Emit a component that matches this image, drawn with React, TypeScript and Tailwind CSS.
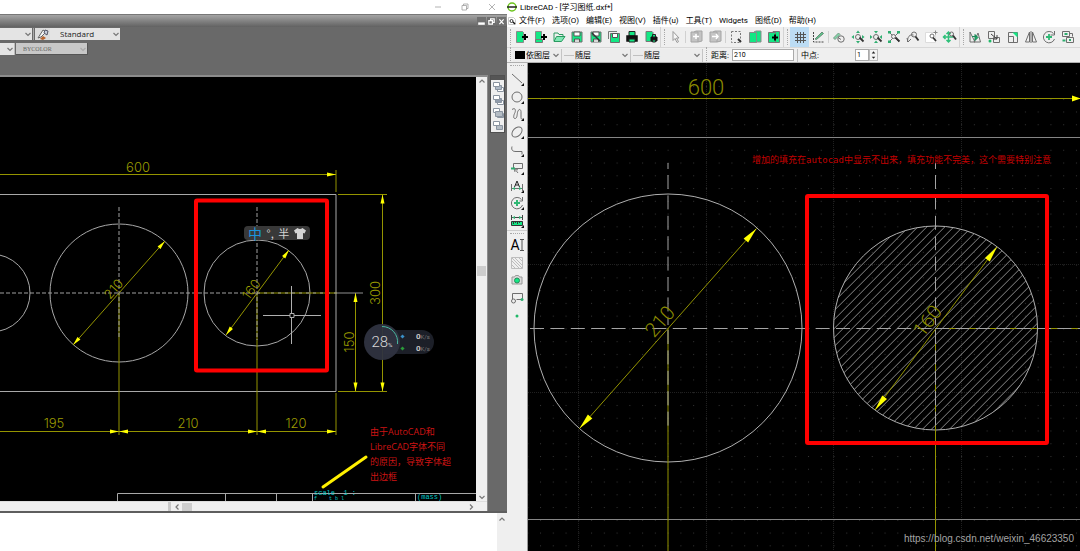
import type { ReactNode } from "react";

const GREEN = "#12e884";
const DIM = "#949400";

/* ---------- icons, all on a 16 x 16 grid ---------- */

function Icon({ children }: { children: ReactNode }) {
  return (
    <svg viewBox="0 0 16 16" className="w-4 h-4 shrink-0" fill="none" stroke="#6e6e6e" strokeWidth="1">
      {children}
    </svg>
  );
}

const floppy = (
  <>
    <path d="M3 3h10v10H3z" fill={GREEN} />
    <path d="M5 3h6v4H5z" fill="#fff" stroke="#555" />
    <path d="M5.500 13v-3h5v3" fill="#d8d8d8" stroke="#555" />
  </>
);

const glass = <path d="M9.500 8.500l4 4" stroke="#333" strokeWidth="1.800" />;

const fileIcons = [
  {
    name: "New",
    art: (
      <>
        <path d="M2.500 2.500h6l1 1v10h-7z" fill={GREEN} stroke="#8a8a8a" />
        <path d="M8 8h6M11 5v6" stroke="#000" strokeWidth="2" />
      </>
    ),
  },
  {
    name: "New from template",
    art: (
      <>
        <path d="M2.500 2.500h6v8h-6z" fill={GREEN} stroke="#8a8a8a" />
        <path d="M2.500 10.500h7v3h-7z" fill={GREEN} stroke="#777" />
        <path d="M8 8h6M11 5v6" stroke="#000" strokeWidth="2" />
      </>
    ),
  },
  {
    name: "Open",
    art: (
      <>
        <path d="M3 12V4h4l1 1.500h4V8" stroke="#2a9a60" />
        <path d="M3 12.500L5.500 7.500H14l-3.500 5z" fill="#7fe8b4" stroke="#2a9a60" />
      </>
    ),
  },
  { name: "Save", art: floppy },
  {
    name: "Save as",
    art: (
      <>
        {floppy}
        <path d="M4 4l8 8" stroke="#333" strokeWidth="1.500" />
      </>
    ),
  },
  {
    name: "Save all",
    art: (
      <>
        <path d="M2.500 10V2.500H11" stroke="#777" />
        <path d="M4.500 4.500h9v9h-9z" fill={GREEN} />
        <path d="M6.500 4.500h5v4h-5z" fill="#fff" stroke="#555" />
      </>
    ),
  },
  {
    name: "Print",
    art: (
      <>
        <path d="M5 2.500h6V7H5z" fill={GREEN} stroke="#222" />
        <path d="M3 7h10v5H3z" fill="#111" stroke="#111" strokeWidth="1.500" />
        <path d="M5 10h6v3H5z" fill={GREEN} stroke="#222" />
      </>
    ),
  },
  {
    name: "Print preview",
    art: (
      <>
        <path d="M3 2.500h6l1 1v9H3z" fill={GREEN} stroke="#777" />
        <path d="M8 8h6v4H8z" fill="#111" stroke="#111" />
        <path d="M9.500 5.500h3V8h-3zM9.500 11h3v2h-3z" fill={GREEN} stroke="#222" />
      </>
    ),
  },
];

const pointerIcons = [
  { name: "Select", art: <path d="M5 2.500v9l2-2 2 4 1.500-.8-2-3.700H11z" fill="#f6f6f6" stroke="#999" /> },
];

const undoIcons = [
  {
    name: "Undo",
    art: (
      <>
        <path d="M3 3h7v10H3zM6 3l2-1h6v10l-4 1" fill="#c4c4c4" stroke="#a4a4a4" />
        <path d="M5 7.500h6M8 5v5" stroke="#fff" strokeWidth="1.500" />
      </>
    ),
  },
  {
    name: "Redo",
    art: (
      <>
        <path d="M3 3h7v10H3zM6 3l2-1h6v10l-4 1" fill="#c4c4c4" stroke="#a4a4a4" />
        <path d="M5 7.500h6M9 5l2 2.500L9 10" stroke="#fff" strokeWidth="1.500" />
      </>
    ),
  },
];

const clipIcons = [
  {
    name: "Cut",
    art: (
      <>
        <path d="M3.500 2.500h9v11h-9z" strokeDasharray="2 1.500" stroke="#777" />
        <path d="M10 10l3 3" stroke="#333" strokeWidth="2" />
      </>
    ),
  },
  {
    name: "Copy",
    art: (
      <>
        <path d="M7 3l2-1h5v11H8z" fill={GREEN} stroke="#8a8a8a" />
        <path d="M2.500 3.500h7v10h-7z" fill={GREEN} stroke="#8a8a8a" />
      </>
    ),
  },
  {
    name: "Paste",
    art: (
      <>
        <path d="M7 2.500h6.500v11H7z" fill={GREEN} stroke="#777" />
        <path d="M2.500 3.500h7v10h-7z" fill={GREEN} stroke="#777" />
        <path d="M6 8.500h6M9 5.500v6" stroke="#000" strokeWidth="2" />
      </>
    ),
  },
];

const viewIcons = [
  {
    name: "Zoom redraw",
    art: (
      <>
        <path d="M2.500 9l5-5 1.500 1.500-5 5z" fill="#7fd8a8" stroke="#7a9a88" />
        <circle cx="10" cy="10" r="3.200" />
        <path d="M7 8.500l3 2" />
      </>
    ),
  },
  {
    name: "Zoom in",
    art: (
      <>
        <circle cx="8" cy="8" r="2.500" />
        <path d="M8 1.500l2 2.500H6zM8 14.500L6 12h4zM1.500 8L4 6v4zM14.500 8L12 10V6z" fill="#2fae70" stroke="none" />
        {glass}
      </>
    ),
  },
  {
    name: "Zoom out",
    art: (
      <>
        <circle cx="8" cy="8" r="2.500" />
        <path d="M8 4.500L6 2h4zM8 11.500l2 2.500H6zM4.500 8L2 10V6zM11.500 8L14 6v4z" fill="#2fae70" stroke="none" />
        {glass}
      </>
    ),
  },
  {
    name: "Zoom auto",
    art: (
      <>
        <path d="M3 3l10 10M13 3L3 13" />
        <circle cx="7.500" cy="7.500" r="2" fill="#efefef" />
        <path d="M2 2h3v2.500H2zM11 2h3v2.500h-3zM2 11.500h3V14H2z" fill="#2fae70" stroke="none" />
        {glass}
      </>
    ),
  },
  {
    name: "Zoom previous",
    art: (
      <>
        <path d="M2.500 13c0-5 2-8 6-7M2 9l1 4 3-3" />
        <circle cx="9" cy="5.500" r="2.500" />
        <path d="M10.500 7.500l3 4" stroke="#333" strokeWidth="1.800" />
      </>
    ),
  },
  {
    name: "Zoom window",
    art: (
      <>
        <path d="M2.500 3.500h10v10h-10z" fill="#fff" stroke="#dcdcdc" />
        <circle cx="9" cy="7" r="2" />
        <path d="M12.500 1.500v4M10.500 3.500h4" stroke="#888" />
        <path d="M10 8.500l3 3.500" stroke="#333" strokeWidth="1.800" />
      </>
    ),
  },
  {
    name: "Zoom pan",
    art: (
      <>
        <path d="M6.500 3v10M1.500 8h10M4.500 5l2-2 2 2M4.500 11l2 2 2-2M3.500 6l-2 2 2 2" stroke="#2fc07a" strokeWidth="1.500" />
        <circle cx="9.500" cy="5" r="2" />
        <path d="M11 6.500l3 4" stroke="#333" strokeWidth="1.800" />
      </>
    ),
  },
];

const modifyIcons = [
  {
    name: "Move",
    art: (
      <>
        <path d="M3 3v10h5zM13.500 13H7l4-9z" />
        <path d="M5 7.500h5M8 5.500l3 3-3 3z" fill="#1cae6a" stroke="#1c8a58" />
      </>
    ),
  },
  {
    name: "Duplicate",
    art: (
      <>
        <path d="M2.500 2.500h6v7h-6zM7.500 8.500h6v5h-6z" />
        <path d="M5 5l6 5M11 6v4H7" stroke="#444" />
        <circle cx="4" cy="12" r="1.500" fill="#20b868" stroke="none" />
      </>
    ),
  },
  {
    name: "Scale",
    art: (
      <>
        <path d="M4.500 3.500h9v10h-9zM4.500 7.500h5v6" />
        <path d="M8.500 3.500h5v5z" fill={GREEN} stroke="none" />
      </>
    ),
  },
  { name: "Mirror", art: <path d="M6.500 3v10h-4zM9.500 3v10h4zM8 2v12" /> },
  {
    name: "Rotate",
    art: (
      <>
        <path d="M12.500 4.500A5.700 5.700 0 1 0 13.500 10M13.500 2v4h-4" />
        <path d="M8 5v6M5 8h6" stroke="#2fb874" strokeWidth="1.800" />
      </>
    ),
  },
  {
    name: "Move and rotate",
    art: (
      <>
        <path d="M2.500 2.500h7v5h-7zM6.500 8.500h7v5h-7zM9.500 4.500h3v3" />
        <path d="M4.500 4h3v2h-3zM9 10h2v2H9zM2.500 10.500h3v2h-3z" fill="#2fae70" stroke="none" />
      </>
    ),
  },
];

const corner = <path d="M15 12v3h-3z" fill="#111" stroke="none" />;

const drawIcons = [
  { name: "Line", art: <path d="M3 3l10 9" /> },
  { name: "Circle", art: <circle cx="8" cy="8" r="5" /> },
  { name: "Curve", art: <path d="M3 3.500c3-2 4 0 3 3-1.500 3-2 6 0 6s2-3 2.500-6 3-4.500 3.500-1v6c0 1.500 1 2 2 1.500" /> },
  { name: "Ellipse", art: <ellipse cx="8" cy="8" rx="6" ry="4" transform="rotate(-45 8 8)" /> },
  { name: "Polyline", art: <path d="M3 4.500c-1 4 1 5 4 5h6v3" /> },
  {
    name: "Select entities",
    art: (
      <>
        <path d="M4.500 3.500h9v5h-9z" />
        <path d="M5 8l4 5M6 12l-1-4 4 2" stroke="#777" />
        <path d="M2 7.500h4v2H2z" fill="#2fae70" stroke="none" />
      </>
    ),
  },
  {
    name: "Dimension",
    art: (
      <>
        <path d="M2.500 6v7M13.500 6v7M3 10.500h10" />
        <path d="M5.500 9L8 3l2.500 6M6.500 7h3" stroke="#222" />
        <path d="M3 10.500l3-1.500v3zM13 10.500L10 9v3z" fill="#2fae70" stroke="none" />
      </>
    ),
  },
  {
    name: "Modify",
    art: (
      <>
        <path d="M12.500 4.500A5.700 5.700 0 1 0 13.500 10M13.500 2v4h-3" />
        <path d="M8 5v6M5 8h6" stroke="#2fb874" strokeWidth="2" />
      </>
    ),
  },
  {
    name: "Info",
    art: (
      <>
        <path d="M2.500 2v5M13.500 2v5M3 4.500h10" stroke="#444" />
        <path d="M3 4.500l3-1.500v3zM13 4.500L10 3v3z" fill="#2fae70" stroke="none" />
        <path d="M2.500 8.500h11v4h-11z" fill={GREEN} stroke="#333" />
        <path d="M4.500 9v2M6.500 9v1M8.500 9v2M10.500 9v1" stroke="#333" />
      </>
    ),
  },
];

const extraIcons = [
  { name: "Hatch", art: <path d="M2.500 2.500h11v11h-11zM3 10l3 3M3 6l7 7M3 3l10 10M6 3l7 7M10 3l3 3" stroke="#bdbdbd" /> },
  {
    name: "Insert image",
    art: (
      <>
        <path d="M3 5h2.500l1-1.500h3l1 1.500H13v7H3z" fill="#dcdcdc" stroke="#999" />
        <circle cx="8" cy="8.500" r="2.500" fill={GREEN} stroke="#2a8a5a" />
      </>
    ),
  },
  {
    name: "Block",
    art: (
      <>
        <path d="M3.500 9V3.500h10v6h-6" />
        <circle cx="4.500" cy="11" r="2" />
        <circle cx="13" cy="9.500" r="1.500" fill="#2fae70" stroke="none" />
      </>
    ),
  },
  { name: "Point", art: <circle cx="8" cy="8" r="1.500" fill="#20b868" stroke="none" /> },
];

type Tool = { name: string; art: ReactNode };

function Tools({ items, className }: { items: Tool[]; className: string }) {
  return (
    <div className={`flex shrink-0 ${className}`}>
      {items.map((item) => (
        <button key={item.name} type="button" aria-label={item.name} className="flex flex-1 items-center justify-center min-w-0">
          <Icon>{item.art}</Icon>
        </button>
      ))}
    </div>
  );
}

function Handle() {
  return (
    <div className="flex w-[6px] shrink-0 items-center justify-center">
      <div className="h-4 w-px border-l border-dotted border-[#a8a8a8]" />
    </div>
  );
}

function Rule() {
  return <div className="mx-px my-1 w-px shrink-0 bg-[#d0d0d0]" />;
}

function Chevron({ dir, color = "#777" }: { dir: "up" | "down" | "left" | "right"; color?: string }) {
  const paths = {
    up: "M1.500 5.500L4 3l2.500 2.500",
    down: "M1.500 3L4 5.500 6.500 3",
    left: "M5.500 1.500L3 4l2.500 2.500",
    right: "M3 1.500L5.500 4 3 6.500",
  };
  return (
    <svg viewBox="0 0 8 8" className="w-2 h-2 shrink-0" fill="none" stroke={color} strokeWidth="1.200">
      <path d={paths[dir]} />
    </svg>
  );
}

/* ---------- drawing helpers ---------- */

// tip at (x, y), pointing in the direction of angle
function Arrow({ x, y, angle, length, width }: { x: number; y: number; angle: number; length: number; width: number }) {
  return (
    <path
      d={`M0 0L${-length} ${-width / 2}V${width / 2}z`}
      fill="#ffff00"
      transform={`translate(${x} ${y}) rotate(${angle})`}
    />
  );
}

function Label({ x, y, angle = 0, size = 13, tall = false, children }: { x: number; y: number; angle?: number; size?: number; tall?: boolean; children: string }) {
  return (
    <text
      transform={`translate(${x} ${y}) rotate(${angle})`}
      textAnchor="middle"
      fontSize={size}
      fill={tall ? "#8c8c00" : "#9c9c00"}
      className={tall ? "font-light [font-family:Roboto,sans-serif]" : "font-light [font-family:Inter,sans-serif]"}
    >
      {children}
    </text>
  );
}

function PlateDrawing() {
  return (
    <svg viewBox="0 77 476 424" preserveAspectRatio="xMinYMin slice" className="absolute inset-0 h-full w-full" fill="none">
      <g stroke="#a8a8a8">
        <path d="M0 194.500H336V391.500H0" />
        <circle cx="-9" cy="293" r="39" />
        <circle cx="119" cy="293" r="69" />
        <circle cx="257" cy="293" r="53" />
      </g>
      <g stroke={DIM}>
        <path d="M0 174.500H336M336 170v22M338 194.500h49M338 391.500h49M336 393v42M382.500 194v197M355.500 293v98" />
        <path d="M119 293v142M257 293v142M257 293h80M0 431.500h336" />
        <path d="M73 345l92-104M226 335l63-85" />
      </g>
      <g stroke="#a0a0a0" strokeDasharray="4 2">
        <path d="M0 293h257M119 207v130M257 207v133" />
        <path d="M257 293h80" strokeDasharray="3 4" />
      </g>
      <path d="M337 293h26" stroke="#909090" />
      <Arrow x={336} y={174.5} angle={0} length={9} width={4} />
      <Arrow x={119} y={431.5} angle={0} length={9} width={4} />
      <Arrow x={119} y={431.5} angle={180} length={9} width={4} />
      <Arrow x={257} y={431.5} angle={0} length={9} width={4} />
      <Arrow x={257} y={431.5} angle={180} length={9} width={4} />
      <Arrow x={336} y={431.5} angle={0} length={9} width={4} />
      <Arrow x={382.5} y={194.5} angle={-90} length={9} width={4} />
      <Arrow x={382.5} y={391.5} angle={90} length={9} width={4} />
      <Arrow x={355.5} y={293} angle={-90} length={9} width={4} />
      <Arrow x={355.5} y={391.5} angle={90} length={9} width={4} />
      <Arrow x={165} y={241} angle={-48.5} length={9} width={4} />
      <Arrow x={73} y={345} angle={131.5} length={9} width={4} />
      <Arrow x={289} y={250} angle={-53.5} length={9} width={4} />
      <Arrow x={226} y={335} angle={126.5} length={9} width={4} />
      <Label x={138} y={172}>600</Label>
      <Label x={54} y={428}>195</Label>
      <Label x={188} y={428}>210</Label>
      <Label x={296} y={428}>120</Label>
      <Label x={354} y={342} angle={-90}>150</Label>
      <Label x={380} y={293} angle={-90}>300</Label>
      <Label x={117} y={292} angle={-48.5}>210</Label>
      <Label x={255} y={292} angle={-53.5}>160</Label>

      {/* title block at the bottom edge */}
      <path d="M117.500 501v-7.500H476M225.500 494v7M276.500 494v7M312.500 494v7M415.500 494v7" stroke="#a8a8a8" />
      <g fill="#00c4c4" className="[font-family:'Liberation_Mono',monospace]">
        <text x="314" y="495" fontSize="7" xmlSpace="preserve">scale  1 :</text>
        <text x="314" y="500" fontSize="5" xmlSpace="preserve">f    t b l</text>
        <text x="417" y="499" fontSize="7">(mass)</text>
      </g>
      <path d="M323 487l43-30" stroke="#fff000" strokeWidth="3" strokeLinecap="round" />

      {/* crosshair */}
      <path d="M263 315.500h27M294 315.500h27M291.500 286v27M291.500 317v27M290 313.500h4v4h-4z" stroke="#b0b0b0" />
      <rect x="196" y="200.500" width="131" height="170" rx="1" stroke="#ff0000" strokeWidth="4" />
    </svg>
  );
}

const HATCH = Array.from({ length: 48 }, (_, i) => 1054.7 + i * 9);

function HatchDrawing() {
  return (
    <svg viewBox="528 63 552 488" preserveAspectRatio="xMinYMin slice" className="absolute inset-0 h-full w-full" fill="none">
      <defs>
        <pattern id="dots" x="578.300" y="137" width="12.760" height="12.760" patternUnits="userSpaceOnUse">
          <rect width="1" height="1" fill="#343434" />
        </pattern>
        <clipPath id="disc">
          <circle cx="935.500" cy="328" r="102" />
        </clipPath>
      </defs>
      <rect x="528" y="63" width="552" height="488" fill="url(#dots)" />
      <path
        d="M578.500 63v488M706.500 63v488M833.500 63v488M961.500 63v488M528 264.500h552M528 392.500h552"
        stroke="#202020"
        strokeDasharray="1 1"
      />
      <path d="M528 137.500h552M528 519.500h552" stroke="#858585" />
      <g clipPath="url(#disc)" stroke="#8a8a8a">
        {HATCH.map((sum) => (
          <path key={sum} d={`M${sum - 440} 440L${sum - 220} 220`} />
        ))}
      </g>
      <g stroke="#b0b0b0">
        <circle cx="668" cy="328" r="134" />
        <circle cx="935.500" cy="328" r="102" />
      </g>
      <g stroke={DIM}>
        <path d="M528 98.500h552M668 328v223M935.500 328v223M935.500 328.500H1080" />
        <path d="M579.500 428.500l177-200M875 410l122-163" />
      </g>
      <g stroke="#a4a4a4" strokeDasharray="14 6.400">
        <path d="M530 328.500h405M668 175v150M935.500 175v150" />
        <path d="M668 163v6M935.500 163v6" strokeDasharray="none" />
        <path d="M935 328.500h145M668 330v100M935.500 330v100" />
      </g>
      <Arrow x={1081} y={98.5} angle={0} length={9} width={6} />
      <Arrow x={756.5} y={228.5} angle={-48.5} length={16} width={6} />
      <Arrow x={579.5} y={428.5} angle={131.5} length={16} width={6} />
      <Arrow x={997} y={247} angle={-53} length={16} width={6} />
      <Arrow x={875} y={410} angle={127} length={16} width={6} />
      <Label x={706} y={95} size={22} tall>600</Label>
      <Label x={665} y={326} angle={-48.5} size={20} tall>210</Label>
      <Label x={933} y={325} angle={-53} size={20} tall>160</Label>
      <rect x="807" y="196" width="240" height="247" rx="1" stroke="#ff0000" strokeWidth="4" />
    </svg>
  );
}

/* ---------- left window ---------- */

function Speed({ color }: { color: string }) {
  return (
    <div className="flex items-center">
      <span className={`mr-3 h-[3px] w-[3px] rotate-45 ${color}`} />
      <span className="font-bold text-[#c8c8c8]">0</span>
      <span className="text-[6px] text-[#777]">K/s</span>
    </div>
  );
}

function AutoCadWindow() {
  return (
    <section className="flex min-w-0 flex-col bg-[#696969]">
      <header className="flex h-[14px] shrink-0 items-center justify-end gap-3 bg-white pr-2 text-[#999]">
        {["M4 8h8", "M4 6h6v6H4zM6 6V4h6v6h-2", "M4 4l8 8M12 4l-8 8"].map((d, i) => (
          <button key={d} type="button" aria-label={["Minimize", "Restore", "Close"][i]} className="flex h-3 w-[15px] items-center justify-center">
            <svg viewBox="0 0 16 16" className="h-3 w-3" fill="none" stroke="currentColor"><path d={d} /></svg>
          </button>
        ))}
      </header>
      <div className="flex h-[13px] shrink-0 items-center justify-end gap-px border-t border-[#777] bg-linear-to-b from-[#a4a4a4] to-[#626262] pr-px">
        {["M3 10h9v2H3z", "M3 6h6v6H3zM6 5V3h6v6h-2", "M4 4l7 8M11 4l-7 8"].map((d, i) => (
          <button key={d} type="button" aria-label={["Minimize drawing", "Restore drawing", "Close drawing"][i]} className="flex h-[9px] w-[9px] items-center justify-center bg-[#707070]">
            <svg viewBox="0 0 15 15" className="h-[9px] w-[9px]" fill="none" stroke="#fff" strokeWidth="2"><path d={d} /></svg>
          </button>
        ))}
      </div>

      <div className="flex h-[48px] shrink-0 flex-col gap-[3px] pt-px text-[8px] leading-3 text-[#222] [font-family:'Open_Sans','Noto_Sans_CJK_SC',sans-serif]">
        <div className="flex h-3">
          <button type="button" aria-label="Text style" className="flex w-8 items-center justify-end bg-[#e4e4e4]">
            <Chevron dir="down" />
          </button>
          <div className="mx-px w-px bg-[#aaa]" />
          <button type="button" aria-label="Style manager" className="flex w-[15px] items-center justify-center bg-[#dcdcdc]">
            <svg viewBox="0 0 14 12" className="h-3 w-[14px]" fill="none">
              <path d="M2 10l5-8 3 2-5 5z" stroke="#666" fill="#f4f4f4" />
              <path d="M9 2l3 1-1 4-3-2z" stroke="#556" fill="#c8d0dc" />
              <path d="M4 11l3-3 3 2-3 2z" fill="#b8622c" />
            </svg>
          </button>
          <label className="relative flex w-[70px] items-center bg-[#e4e4e4]">
            <select aria-label="Dimension style" className="h-3 w-full appearance-none pl-[10px]">
              <option>Standard</option>
            </select>
            <span className="absolute right-0"><Chevron dir="down" /></span>
          </label>
        </div>
        <div className="flex h-3">
          <button type="button" aria-label="Line weight" className="flex w-[14px] items-center justify-end bg-[#e4e4e4]">
            <Chevron dir="down" />
          </button>
          <div className="mr-px w-px bg-[#bbb]" />
          <label className="relative flex w-[72px] items-center border-r border-b border-[#555] bg-[#c8c8c8]">
            <select aria-label="Plot style" disabled className="w-full appearance-none pl-[7px] text-[6px] leading-3 text-[#666] opacity-100 [font-family:'Liberation_Serif',serif]">
              <option>BYCOLOR</option>
            </select>
            <span className="absolute right-0"><Chevron dir="down" color="#aaa" /></span>
          </label>
        </div>
      </div>

      <div className="flex min-h-0 flex-1 border-b-2 border-[#5e5e5e]">
        <div className="flex min-w-0 flex-1 flex-col border-t-2 border-r border-[#8c8c8c]">
          <div className="flex min-h-0 flex-1">
            <div className="relative min-w-0 flex-1 overflow-hidden bg-black">
              <PlateDrawing />
              {/* input method bar */}
              <div className="absolute top-[149px] left-[244px] flex h-[14px] w-[66px] items-center justify-between rounded-sm bg-[#383838] px-1 text-[11px] leading-[14px] text-[#d4d4d4] [font-family:'Noto_Sans_CJK_SC',sans-serif]">
                <span className="text-[14px] text-[#1a94dc]">中</span>
                <span>°,</span>
                <span>半</span>
                <svg viewBox="0 0 12 11" className="h-[11px] w-3" fill="#d4d4d4">
                  <path d="M3.500 0L0 2.500 1.500 5.500 3 5v6h6V5l1.500.5L12 2.500 8.500 0Q6 2 3.500 0z" />
                </svg>
              </div>
              {/* memory and network meter */}
              <div className="absolute top-[247px] left-[364px] flex h-9 items-center">
                <div className="relative z-10 flex h-9 w-9 items-center justify-center rounded-full bg-[#2f3340]/95 text-[#d8d8d8] [font-family:Roboto,sans-serif]">
                  <span className="text-[15px] font-light">28</span>
                  <span className="pt-1 text-[6px]">%</span>
                  <svg viewBox="0 0 36 36" className="absolute inset-0" fill="none">
                    <path d="M18 2.500A15.500 15.500 0 0 1 33.500 20" stroke="#48b8a0" />
                  </svg>
                </div>
                <div className="-ml-4 flex h-6 w-[50px] flex-col justify-center gap-px rounded-r-full bg-[#1c1f28] pl-[17px] text-[8px] leading-[11px] [font-family:Roboto,sans-serif]">
                  <Speed color="bg-[#3a90c8]" />
                  <Speed color="bg-[#2a9a3a]" />
                </div>
              </div>
              <p className="absolute top-[347px] left-[370px] w-[84px] text-[9px] leading-[15px] whitespace-nowrap text-[#cc1414] [font-family:'Open_Sans','Noto_Sans_CJK_SC',sans-serif]">
                由于AutoCAD和
                <br />
                LibreCAD字体不同
                <br />
                的原因，导致字体超
                <br />
                出边框
              </p>
            </div>
            <div className="flex w-[11px] shrink-0 flex-col items-center bg-[#efefef]">
              <Chevron dir="up" />
              <div className="flex flex-1 flex-col pt-[181px]">
                <div className="h-[10px] w-[9px] bg-[#cdcdcd]" />
              </div>
              <Chevron dir="down" />
            </div>
          </div>
          <div className="flex h-[10px] shrink-0 items-center border-t border-[#ddd] bg-[#efefef]">
            <div className="ml-[168px] h-full w-[3px] bg-[#c8c8c8]" />
            <div className="flex flex-1 items-center pr-3 pl-[2px]">
              <Chevron dir="left" />
              <div className="ml-px h-2 w-[10px] bg-[#cdcdcd]" />
              <span className="ml-auto"><Chevron dir="right" /></span>
            </div>
          </div>
        </div>

        <div className="w-[19px] shrink-0 px-[2px]">
          <div className="border border-[#505050] bg-[#efefef]">
            <div className="h-1 bg-[#555]" />
            {[
              ["#fff", "#aeb9c6", "#fff"],
              ["#fff", "#8f9aaa", "#fff"],
              ["#fff", "#fff", "#b4bcc4"],
              ["#fff", "#b4bcc4", "#b4bcc4"],
            ].map((fills, i) => (
              <button key={i} type="button" aria-label={`Draw order ${i + 1}`} className="flex h-[13px] w-full items-center justify-center">
                <svg viewBox="0 0 12 12" className="h-3 w-3" stroke="#8a94a0">
                  {i === 3 ? (
                    <path d="M4.500 5.500h6v4h-6z" fill={fills[2]} />
                  ) : (
                    <path d="M5.500 6.500h6v4h-6z" fill={fills[2]} />
                  )}
                  {i < 2 && <path d="M3.500 4.500h6v4h-6z" fill={fills[1]} />}
                  <path d="M1.500 1.500h6v4h-6z" fill={fills[0]} />
                  {i === 2 && <path d="M3.500 4.500h7v5h-7z" fill={fills[2]} />}
                </svg>
              </button>
            ))}
          </div>
        </div>
      </div>

      <footer className="flex h-[38px] shrink-0 justify-end bg-white">
        <div className="flex w-[10px] justify-center bg-[#efefef] pt-[2px]"><Chevron dir="up" /></div>
      </footer>
    </section>
  );
}

/* ---------- right window ---------- */

const menus = ["文件(F)", "选项(O)", "编辑(E)", "视图(V)", "插件(u)", "工具(T)", "Widgets", "图纸(D)", "帮助(H)"];

function LineSelect({ label, className }: { label: string; className: string }) {
  return (
    <label className={`relative flex h-[13px] shrink-0 items-center border-r border-[#c4c4c4] bg-[#ececec] pl-[2px] ${className}`}>
      <span className="h-px w-[10px] shrink-0 bg-[#c0c0c0]" />
      <select aria-label={label} className="w-full appearance-none pl-px">
        <option>随层</option>
      </select>
      <span className="absolute right-px"><Chevron dir="down" /></span>
    </label>
  );
}

function LibreCadWindow() {
  return (
    <section className="flex min-w-0 flex-col overflow-hidden bg-[#efefef] text-[8px] leading-[13px] text-black [font-family:Roboto,'Noto_Sans_CJK_SC',sans-serif]">
      <header className="flex h-[14px] shrink-0 items-center gap-[3px] bg-white">
        <svg viewBox="0 0 10 10" className="h-[10px] w-[10px]" fill="none">
          <circle cx="5" cy="5" r="4" stroke="#6cc41c" strokeWidth="1.500" />
          <path d="M0 5h10" stroke="#222" strokeWidth="1.500" />
        </svg>
        <h1>LibreCAD - [学习图纸.dxf*]</h1>
      </header>
      <nav className="flex h-[13px] shrink-0 items-center gap-[7px] bg-white">
        <svg viewBox="0 0 8 8" className="-mr-1 ml-px h-2 w-2" fill="none" stroke="#888">
          <path d="M.5.500h5l2 2v5h-7z" stroke="#ccc" />
          <circle cx="3.500" cy="4" r="1.500" stroke="#333" />
          <path d="M5 5l2 2" stroke="#111" strokeWidth="1.500" />
        </svg>
        {menus.map((menu) => (
          <button key={menu} type="button" className="whitespace-nowrap">{menu}</button>
        ))}
      </nav>

      <div className="flex h-[21px] shrink-0 border-b border-[#d8d8d8]">
        <Handle />
        <Tools items={fileIcons} className="w-[147px]" />
        <div className="w-px bg-[#d4d4d4]" />
        <Handle />
        <Tools items={pointerIcons} className="w-[17px]" />
        <Rule />
        <Tools items={undoIcons} className="w-[37px]" />
        <Rule />
        <Tools items={clipIcons} className="w-[56px]" />
        <div className="w-px bg-[#d4d4d4]" />
        <Handle />
        <button type="button" aria-label="Grid" className="flex w-[19px] shrink-0 items-center justify-center bg-[#bcdcf4]">
          <Icon><path d="M5.500 3v11M8.500 3v11M11.500 3v11M3 5.500h11M3 8.500h11M3 11.500h11" stroke="#555" /></Icon>
        </button>
        <button type="button" aria-label="Draft" className="flex w-[18px] shrink-0 items-center justify-center">
          <Icon>
            <path d="M3.500 3v10H14" stroke="#444" strokeDasharray="2 1" />
            <path d="M5 10l7-7 1.500 1.500-7 6z" fill="#5cc88c" stroke="#6a8a78" />
          </Icon>
        </button>
        <Rule />
        <Tools items={viewIcons} className="w-[129px]" />
        <div className="w-px bg-[#d4d4d4]" />
        <Handle />
        <Tools items={modifyIcons} className="w-[111px]" />
      </div>

      <div className="flex h-[15px] shrink-0 items-center border-b border-[#b0b0b0]">
        <Handle />
        <label className="relative flex h-[13px] w-[49px] shrink-0 items-center border-r border-[#c4c4c4] bg-[#ececec] pl-[2px]">
          <span className="h-2 w-[10px] shrink-0 bg-black" />
          <select aria-label="Color" className="w-full appearance-none pl-px">
            <option>依图层</option>
          </select>
          <span className="absolute right-px"><Chevron dir="down" /></span>
        </label>
        <LineSelect label="Width" className="w-[69px]" />
        <LineSelect label="Line type" className="w-[72px]" />
        <Handle />
        <label htmlFor="distance" className="w-[23px] shrink-0 pl-[2px] whitespace-nowrap">距离:</label>
        <input id="distance" defaultValue="210" className="h-3 w-[62px] shrink-0 border border-[#aaa] bg-white pl-px text-[7px] leading-[10px]" />
        <div className="mx-[3px] h-[13px] w-px bg-[#c0c0c0]" />
        <label htmlFor="middle" className="w-[54px] shrink-0">中点:</label>
        <input id="middle" defaultValue="1" className="h-3 w-[14px] shrink-0 border border-[#aaa] bg-white pl-px text-[7px] leading-[10px]" />
        <div className="flex h-3 w-[9px] shrink-0 flex-col border border-[#bbb] bg-[#f4f4f4]">
          {["M4 1L6 3.500H2z", "M4 4L2 1.500h4z"].map((d, i) => (
            <button key={d} type="button" aria-label={i ? "Decrease" : "Increase"} className="flex flex-1 items-center justify-center">
              <svg viewBox="0 0 8 5" className="h-[5px] w-2" fill="#222"><path d={d} /></svg>
            </button>
          ))}
        </div>
      </div>

      <div className="flex min-h-0 flex-1">
        <aside className="flex w-[21px] shrink-0 flex-col border-r border-[#999]">
          <div className="mx-[3px] mt-[2px] mb-1 border-t border-dotted border-[#a8a8a8]" />
          <div className="flex h-[160px] flex-col">
            {drawIcons.map((item) => (
              <button key={item.name} type="button" aria-label={item.name} className="flex min-h-0 flex-1 items-center justify-center">
                <Icon>
                  {item.art}
                  {corner}
                </Icon>
              </button>
            ))}
          </div>
          <div className="mb-[2px] border-t border-[#ccc]" />
          <div className="mx-[3px] mb-[2px] border-t border-dotted border-[#a8a8a8]" />
          <div className="flex h-[89px] flex-col">
            <button type="button" aria-label="Text" className="flex flex-1 items-center justify-center text-[14px] leading-4">
              A
              <svg viewBox="0 0 4 12" className="h-3 w-1" fill="none" stroke="#555"><path d="M0 .5h4M0 11.500h4M2 0v12" /></svg>
            </button>
            {extraIcons.map((item) => (
              <button key={item.name} type="button" aria-label={item.name} className="flex min-h-0 flex-1 items-center justify-center">
                <Icon>{item.art}</Icon>
              </button>
            ))}
          </div>
        </aside>

        <main className="relative min-w-0 flex-1 overflow-hidden bg-black">
          <HatchDrawing />
          <p className="absolute top-[90px] left-[224px] text-[9px] leading-[14px] whitespace-nowrap text-[#c40000] [font-family:'DejaVu_Sans_Mono','Noto_Sans_CJK_SC',monospace]">
            增加的填充在autocad中显示不出来，填充功能不完美，这个需要特别注意
          </p>
          <p className="absolute right-[6px] bottom-[5px] text-[10px] leading-[14px] text-[#a4a4a4] [font-family:'Liberation_Sans',Arial,sans-serif]">
            https://blog.csdn.net/weixin_46623350
          </p>
        </main>
      </div>
    </section>
  );
}

export default function App() {
  return (
    <div className="grid h-screen grid-cols-[507fr_573fr] overflow-hidden bg-white">
      <AutoCadWindow />
      <LibreCadWindow />
    </div>
  );
}
